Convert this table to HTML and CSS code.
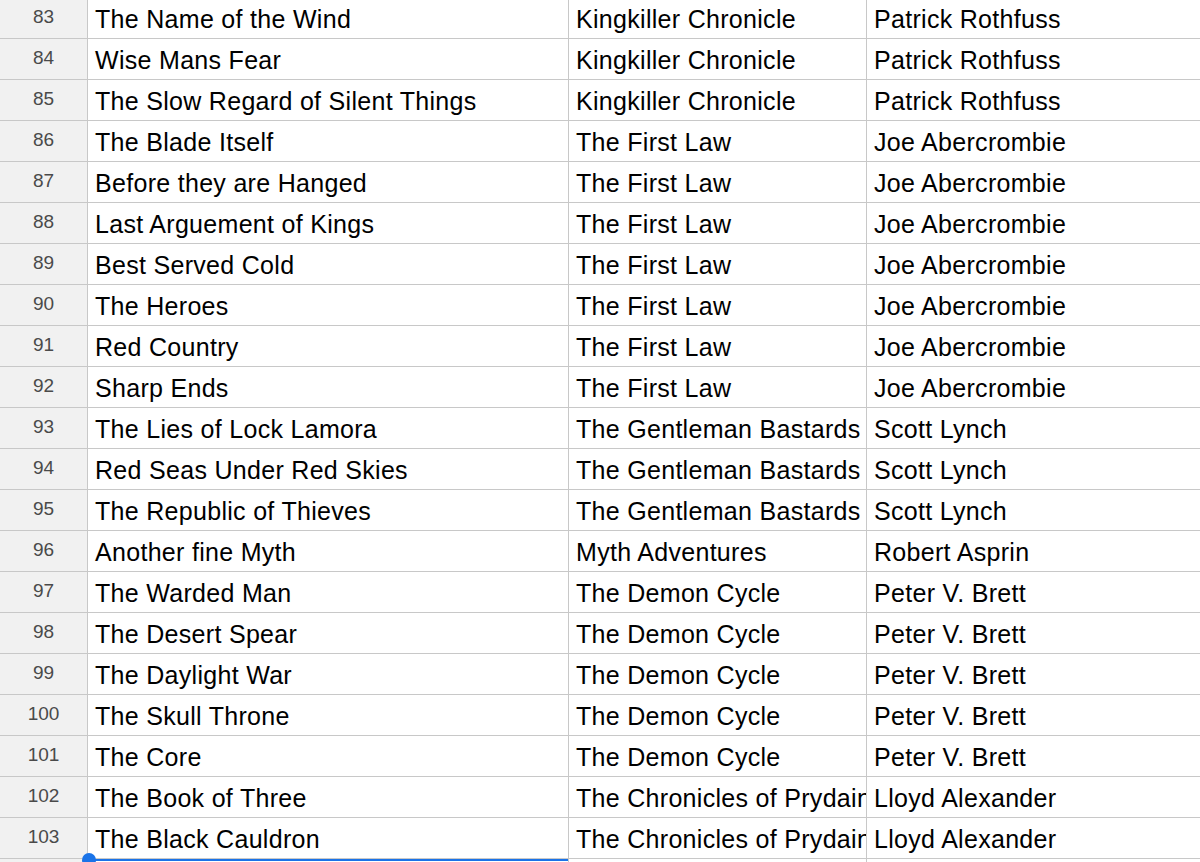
FILE: index.html
```html
<!DOCTYPE html>
<html>
<head>
<meta charset="utf-8">
<link rel="stylesheet" href="styles.css">
</head>
<body>
<div class="sheet">
  <div class="rh">83</div><div class="c">The Name of the Wind</div><div class="c">Kingkiller Chronicle</div><div class="c">Patrick Rothfuss</div>
  <div class="rh">84</div><div class="c">Wise Mans Fear</div><div class="c">Kingkiller Chronicle</div><div class="c">Patrick Rothfuss</div>
  <div class="rh">85</div><div class="c">The Slow Regard of Silent Things</div><div class="c">Kingkiller Chronicle</div><div class="c">Patrick Rothfuss</div>
  <div class="rh">86</div><div class="c">The Blade Itself</div><div class="c">The First Law</div><div class="c">Joe Abercrombie</div>
  <div class="rh">87</div><div class="c">Before they are Hanged</div><div class="c">The First Law</div><div class="c">Joe Abercrombie</div>
  <div class="rh">88</div><div class="c">Last Arguement of Kings</div><div class="c">The First Law</div><div class="c">Joe Abercrombie</div>
  <div class="rh">89</div><div class="c">Best Served Cold</div><div class="c">The First Law</div><div class="c">Joe Abercrombie</div>
  <div class="rh">90</div><div class="c">The Heroes</div><div class="c">The First Law</div><div class="c">Joe Abercrombie</div>
  <div class="rh">91</div><div class="c">Red Country</div><div class="c">The First Law</div><div class="c">Joe Abercrombie</div>
  <div class="rh">92</div><div class="c">Sharp Ends</div><div class="c">The First Law</div><div class="c">Joe Abercrombie</div>
  <div class="rh">93</div><div class="c">The Lies of Lock Lamora</div><div class="c">The Gentleman Bastards</div><div class="c">Scott Lynch</div>
  <div class="rh">94</div><div class="c">Red Seas Under Red Skies</div><div class="c">The Gentleman Bastards</div><div class="c">Scott Lynch</div>
  <div class="rh">95</div><div class="c">The Republic of Thieves</div><div class="c">The Gentleman Bastards</div><div class="c">Scott Lynch</div>
  <div class="rh">96</div><div class="c">Another fine Myth</div><div class="c">Myth Adventures</div><div class="c">Robert Asprin</div>
  <div class="rh">97</div><div class="c">The Warded Man</div><div class="c">The Demon Cycle</div><div class="c">Peter V. Brett</div>
  <div class="rh">98</div><div class="c">The Desert Spear</div><div class="c">The Demon Cycle</div><div class="c">Peter V. Brett</div>
  <div class="rh">99</div><div class="c">The Daylight War</div><div class="c">The Demon Cycle</div><div class="c">Peter V. Brett</div>
  <div class="rh">100</div><div class="c">The Skull Throne</div><div class="c">The Demon Cycle</div><div class="c">Peter V. Brett</div>
  <div class="rh">101</div><div class="c">The Core</div><div class="c">The Demon Cycle</div><div class="c">Peter V. Brett</div>
  <div class="rh">102</div><div class="c">The Book of Three</div><div class="c">The Chronicles of Prydain</div><div class="c">Lloyd Alexander</div>
  <div class="rh">103</div><div class="c">The Black Cauldron</div><div class="c">The Chronicles of Prydain</div><div class="c">Lloyd Alexander</div>
  <div class="rh"></div><div class="c selected"><span class="sel-box"></span><span class="handle"></span></div><div class="c"></div><div class="c"></div>
</div>
</body>
</html>
```

FILE: styles.css
```css
html, body {
  margin: 0;
  padding: 0;
  background: #ffffff;
  overflow: hidden;
  height: 862px;
}

.sheet {
  display: grid;
  grid-template-columns: 88px 481px 298px 1fr;
  grid-auto-rows: 41px;
  margin-top: -2px;
  font-family: "Liberation Sans", Arial, sans-serif;
}

.rh,
.c {
  box-sizing: border-box;
  border-right: 1px solid #c8c8c8;
  border-bottom: 1px solid #c8c8c8;
  display: flex;
  align-items: center;
  white-space: nowrap;
  overflow: hidden;
}

.rh {
  background: #f1f1f1;
  color: #4a4a4a;
  font-size: 19px;
  justify-content: center;
  padding-bottom: 2px;
}

.c {
  font-size: 25px;
  letter-spacing: 0.3px;
  color: #000000;
  padding-left: 7px;
  padding-top: 2px;
}

.c:nth-child(4n) {
  border-right: none;
}

.selected {
  position: relative;
  overflow: visible;
}

.sel-box {
  position: absolute;
  left: -1px;
  right: 0;
  top: 0;
  height: 40px;
  border-top: 2px solid #1a73e8;
  box-sizing: border-box;
}

.handle {
  position: absolute;
  left: -6px;
  top: -6px;
  width: 14px;
  height: 14px;
  border-radius: 50%;
  background: #1a73e8;
}
```
